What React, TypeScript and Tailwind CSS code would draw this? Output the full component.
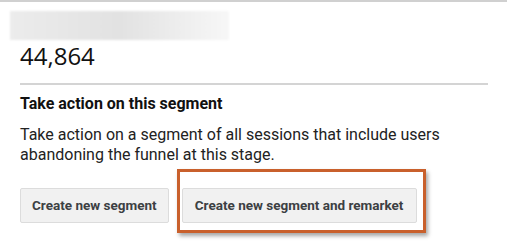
export default function App() {
    return (
        <div className="w-[507px] h-[242px] bg-white border-t-2 border-[#d0d0d0] overflow-hidden" style={{ fontFamily: "Roboto, Arial, sans-serif" }}>
            <div className="ml-[10px] mt-[9px] w-[219px] h-[29px] bg-gradient-to-r from-[#ececec] via-[#e2e2e2] to-[#f7f7f7] blur-[1px]" />
            <div className="pl-5 pr-5">
                <div className="text-[24px] leading-[30px] mt-[1px] text-[#111]" style={{ fontFamily: "'Open Sans', sans-serif" }}>44,864</div>
                <div className="h-[2px] bg-[#d4d4d4] mt-[12px] w-[468px]" />
                <h3 className="mt-[10px] text-[16px] leading-[18px] font-bold text-[#111]">Take action on this segment</h3>
                <p className="mt-[12px] text-[16px] leading-[20px] text-[#222]">
                    Take action on a segment of all sessions that include users abandoning the funnel at this stage.
                </p>
                <div className="flex gap-[13px] mt-[23px]">
                    <button className="h-[35px] px-[11px] bg-[#f1f1f1] border border-[#dcdcdc] rounded-[2px] text-[13.5px] font-bold text-[#3c4043]">
                        Create new segment
                    </button>
                    <div className="relative">
                        <button className="h-[35px] px-[11px] w-[235px] bg-[#f1f1f1] border border-[#dcdcdc] rounded-[2px] text-[13.5px] font-bold text-[#3c4043]">
                            Create new segment and remarket
                        </button>
                        <div className="absolute left-[-5px] top-[-19px] w-[249px] h-[64px] border-[3px] border-[#c9602c] shadow-[2px_3px_4px_rgba(0,0,0,0.35)] pointer-events-none" />
                    </div>
                </div>
            </div>
        </div>
    );
}
